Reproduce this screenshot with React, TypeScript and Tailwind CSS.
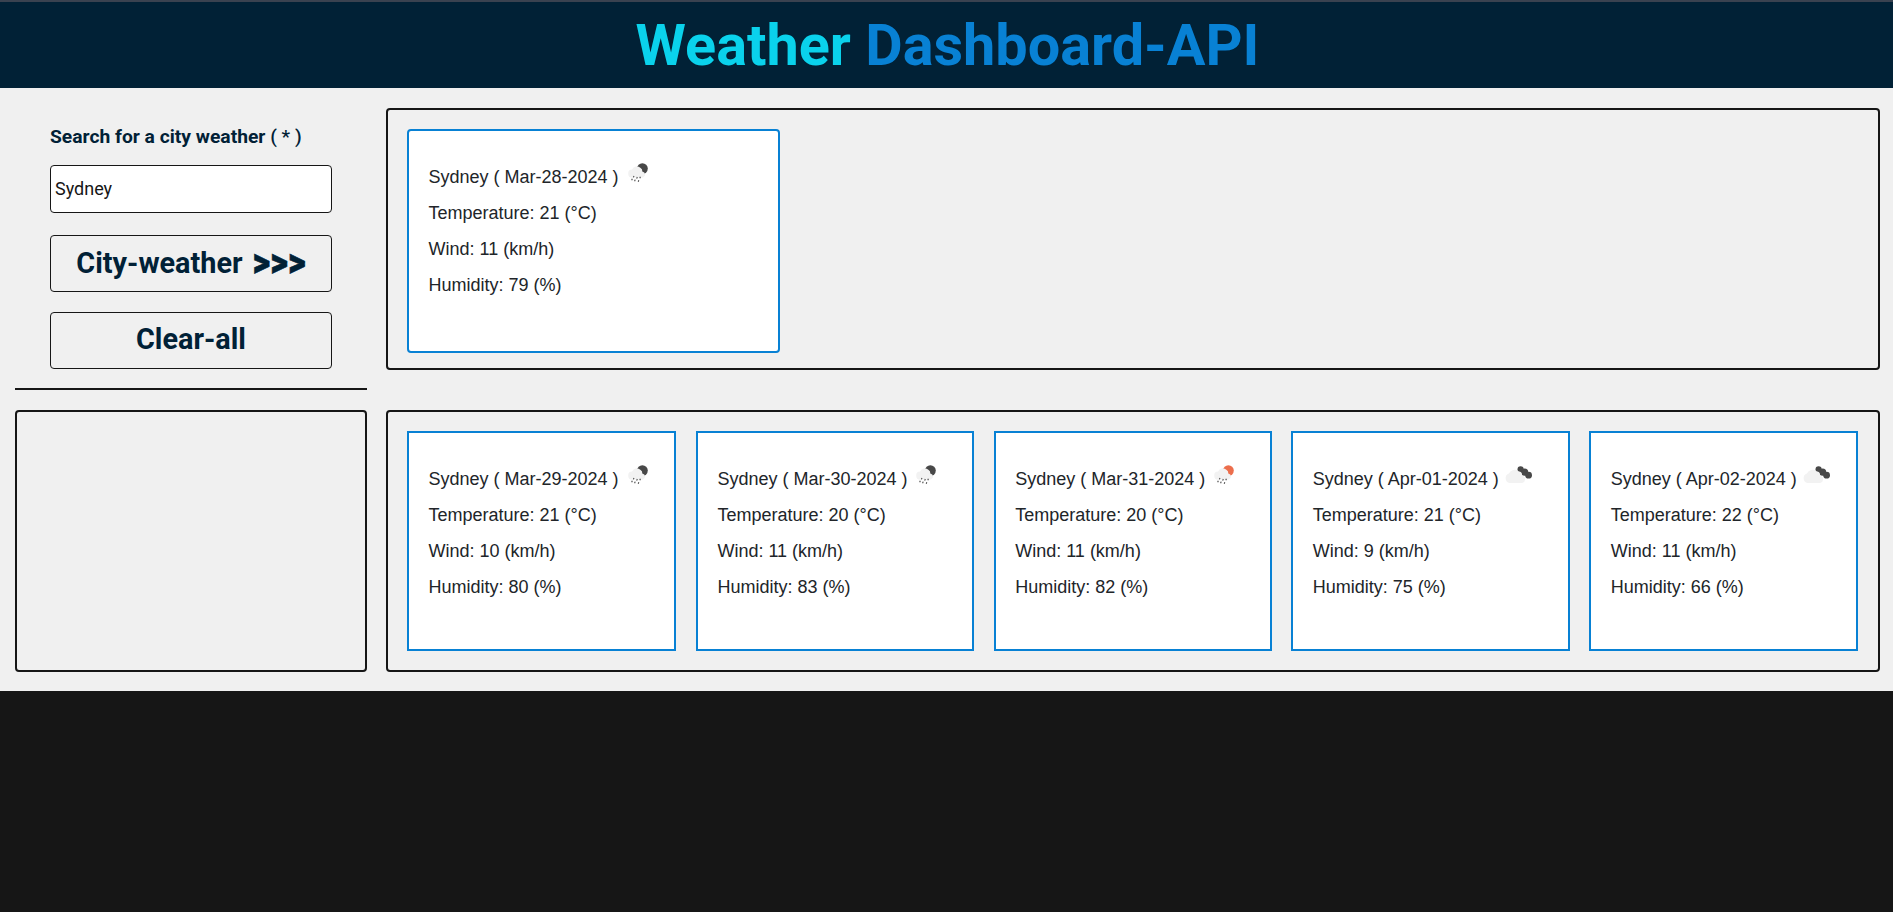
import { useState } from "react";

type Sky = "rainNight" | "rainDay" | "clouds";

interface Forecast {
  date: string;
  sky: Sky;
  temperature: number;
  wind: number;
  humidity: number;
}

const CITY = "Sydney";

const today: Forecast = { date: "Mar-28-2024", sky: "rainNight", temperature: 21, wind: 11, humidity: 79 };

const forecast: Forecast[] = [
  { date: "Mar-29-2024", sky: "rainNight", temperature: 21, wind: 10, humidity: 80 },
  { date: "Mar-30-2024", sky: "rainNight", temperature: 20, wind: 11, humidity: 83 },
  { date: "Mar-31-2024", sky: "rainDay", temperature: 20, wind: 11, humidity: 82 },
  { date: "Apr-01-2024", sky: "clouds", temperature: 21, wind: 9, humidity: 75 },
  { date: "Apr-02-2024", sky: "clouds", temperature: 22, wind: 11, humidity: 66 },
];

function SkyIcon({ sky }: { sky: Sky }) {
  if (sky === "clouds") {
    return (
      <svg className="h-9 w-9 shrink-0" viewBox="0 0 36 36" aria-hidden="true">
        <g fill="#484848">
          <circle cx="18.6" cy="12.4" r="3.1" />
          <circle cx="22.6" cy="15.2" r="3.6" />
          <circle cx="26.6" cy="18.2" r="3.4" />
        </g>
        <path
          fill="#f2f2f2"
          d="M7.5 26 a4.9 4.9 0 0 1 -.6 -9.4 a6.3 6.3 0 0 1 9.6 -2.4 a4 4 0 0 1 3.6 4.2 a4 4 0 0 1 3 4 a4 4 0 0 1 -3 3.6 Z"
        />
      </svg>
    );
  }
  return (
    <svg className="h-9 w-9 shrink-0" viewBox="0 0 36 36" aria-hidden="true">
      <circle cx="20.4" cy="13.6" r="5.4" fill={sky === "rainDay" ? "#ec6e4c" : "#484848"} />
      <path
        fill="#f2f2f2"
        d="M10.3 22.6 a4 4 0 0 1 -.2 -8 a5.2 5.2 0 0 1 8.2 -1.8 a3.6 3.6 0 0 1 2 3.6 a3.2 3.2 0 0 1 .6 6.2 Z"
      />
      <g stroke="#484848" strokeWidth="1.1">
        <path d="M12 21 l-.6 1.4 M15.3 22 l-.6 1.6 M18.4 21.8 l-.6 1.5 M10.3 23.8 l-.6 1.4 M13.2 24.6 l-.6 1.6 M16.8 25.2 l-.6 1.5" />
      </g>
    </svg>
  );
}

function WeatherDetails({ day }: { day: Forecast }) {
  return (
    <div className="flex flex-col whitespace-pre pl-[19.5px] pt-7 font-['Liberation_Sans',Arial,sans-serif] text-[18px] leading-9 text-[#212529]">
      <div className="flex h-9">
        <span>{`${CITY} ( ${day.date} ) `}</span>
        <span className="-ml-[2px] -mt-1">
          <SkyIcon sky={day.sky} />
        </span>
      </div>
      <p>Temperature: {day.temperature} (°C)</p>
      <p>Wind: {day.wind} (km/h)</p>
      <p>Humidity: {day.humidity} (%)</p>
    </div>
  );
}

export default function App() {
  const [city, setCity] = useState(CITY);

  return (
    <div className="min-h-screen bg-[#161616] font-[Roboto,sans-serif]">
      <header className="flex h-[88px] justify-center border-t-2 border-[#3a4250] bg-[#012136]">
        <h1 className="pl-0.5 pt-0.5 text-[57.6px] font-bold leading-[84px] text-[#0881d4]">
          <span className="text-[#0ad2ec]">Weather</span> Dashboard-API
        </h1>
      </header>

      <main className="grid h-[603px] grid-cols-[352px_1494px] grid-rows-[262px_262px] gap-x-[19px] gap-y-10 bg-[#f0f0f0] pl-[15px] pt-5">
        <section className="h-[282px] border-b-2 border-[#161616] px-[35px] pt-[17px] text-[#012136]">
          <label htmlFor="city" className="block h-10 text-[19.25px] font-bold leading-6">
            Search for a city weather <span className="font-medium">( * )</span>
          </label>
          <input
            id="city"
            value={city}
            onChange={(e) => setCity(e.target.value)}
            className="block h-12 w-full rounded border border-[#161616] bg-white px-1 pb-0.5 text-[18px] text-[#161616] outline-none"
          />
          <button className="mt-[22px] flex h-[57px] w-full items-center justify-center gap-2.5 rounded border border-[#161616] text-[28.8px] font-bold">
            City-weather
            <span className="inline-block scale-y-[1.2] pb-[3px] text-[34.5px] font-black leading-8 [-webkit-text-stroke:0.5px_#012136]">
              &gt;&gt;&gt;
            </span>
          </button>
          <button className="mt-5 block h-[57px] w-full rounded border border-[#161616] pb-0.5 text-[28.8px] font-bold">
            Clear-all
          </button>
        </section>

        <section className="rounded border-2 border-[#161616] p-[19px]">
          <article className="h-56 w-[373px] rounded border-2 border-[#0881d4] bg-white">
            <WeatherDetails day={today} />
          </article>
        </section>

        <section className="rounded border-2 border-[#161616]" />

        <section className="grid grid-cols-[269.3px_278.2px_278px_278.4px_268.7px] gap-x-[19.6px] rounded border-2 border-[#161616] p-[19px]">
          {forecast.map((day) => (
            <article key={day.date} className="h-[220px] border-2 border-[#0881d4] bg-white">
              <WeatherDetails day={day} />
            </article>
          ))}
        </section>
      </main>
    </div>
  );
}
